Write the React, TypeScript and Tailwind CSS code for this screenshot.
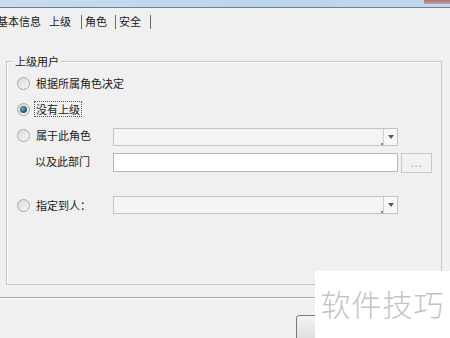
import React from 'react';

const font = { fontFamily: '"Noto Sans CJK SC", "Noto Sans", sans-serif' };

const Radio: React.FC<{ checked?: boolean }> = ({ checked = false }) => (
  <div className="w-[13px] h-[13px] rounded-full border border-[#a8a8a8] bg-[linear-gradient(135deg,#d8d8d8,#f8f8f8)] flex items-center justify-center shrink-0">
    {checked && (
      <div className="w-[7px] h-[7px] rounded-full bg-[radial-gradient(circle_at_40%_40%,#6fb5c8_0%,#2c5f73_55%,#1d3f4f_100%)]" />
    )}
  </div>
);

const Combo: React.FC = () => (
  <div className="w-[285px] h-[18px] border border-[#c4c4c4] bg-[#f4f4f4] flex justify-end">
    <div className="relative w-[14px] h-full border-l border-[#cfcfcf] bg-[#f7f7f7] flex items-center justify-center">
      <div className="w-0 h-0 border-l-[3px] border-r-[3px] border-t-[4px] border-l-transparent border-r-transparent border-t-[#5a5a5a]" />
      <div className="absolute -left-[3px] bottom-0 w-[2px] h-[2px] bg-[#8a8a8a]" />
    </div>
  </div>
);

const Sep: React.FC<{ className?: string }> = ({ className = '' }) => (
  <span className={`w-px h-[14px] bg-[#6a6a6a] ${className}`} />
);

export default function App() {
  return (
    <div className="relative w-[450px] h-[338px] overflow-hidden bg-[#f0f0f0] text-[11px] text-[#1a1a1a]" style={font}>
      {/* title bar remnant */}
      <div className="h-[8px] flex bg-[linear-gradient(90deg,#c9dcee,#bcd4ea_60%,#c4d8ec)] border-b border-[#6f7f8f]">
        <div className="flex-1" />
        <div className="w-[26px] h-[4px] bg-[linear-gradient(180deg,#a87472,#c0a0a0)]" />
      </div>

      {/* tab strip */}
      <div className="h-[27px] flex items-center -ml-[3px]">
        <span>基本信息</span>
        <span className="ml-[8px]">上级</span>
        <Sep className="ml-[10px]" />
        <span className="ml-[3px]">角色</span>
        <Sep className="ml-[8px]" />
        <span className="ml-[3px]">安全</span>
        <Sep className="ml-[9px]" />
      </div>

      {/* group box */}
      <div className="relative ml-[6px] mt-[26px] w-[436px] h-[224px] border border-[#c6c6c6] shadow-[inset_1px_1px_0_#ffffff]">
        <span className="absolute -top-[8px] left-[6px] px-[2px] bg-[#f0f0f0] leading-[14px]">上级用户</span>

        <div className="pt-[8px] pl-[10px] flex flex-col">
          <div className="h-[26px] flex items-center gap-[6px]">
            <Radio />
            <span>根据所属角色决定</span>
          </div>
          <div className="h-[26px] flex items-center gap-[4px]">
            <Radio checked />
            <span className="px-[1px] leading-[14px] border border-dotted border-[#555]">没有上级</span>
          </div>
          <div className="h-[26px] flex items-center">
            <div className="w-[96px] flex items-center gap-[6px]">
              <Radio />
              <span>属于此角色</span>
            </div>
            <div className="mt-[3px]"><Combo /></div>
          </div>
          <div className="h-[26px] flex items-center">
            <span className="w-[96px] pl-[18px]">以及此部门</span>
            <div className="mt-[3px] w-[285px] h-[19px] border border-[#b5b7bc] bg-white" />
            <div className="mt-[3px] ml-[3px] w-[31px] h-[20px] border border-[#c8c8c8] bg-[#f2f2f2] flex items-center justify-center text-[#9a9a9a] tracking-[1px]">...</div>
          </div>
          <div className="mt-[18px] h-[26px] flex items-center">
            <div className="w-[96px] flex items-center gap-[6px]">
              <Radio />
              <span>指定到人：</span>
            </div>
            <Combo />
          </div>
        </div>
      </div>

      {/* separator */}
      <div className="mt-[12px] h-[2px] bg-[#a9a9a9] border-b border-white" />

      {/* bottom button */}
      <div className="absolute left-[296px] top-[315px] w-[80px] h-[30px] rounded-[3px] border border-[#7a7a7a] bg-[linear-gradient(180deg,#f4f4f4,#dadada)]" />

      {/* watermark */}
      <div className="absolute left-[315px] top-[271px] w-[135px] h-[67px] bg-white flex items-center justify-center">
        <span className="text-[30px] text-[#c4c4c4] font-light tracking-[1px] -mt-[2px]">软件技巧</span>
      </div>
    </div>
  );
}
